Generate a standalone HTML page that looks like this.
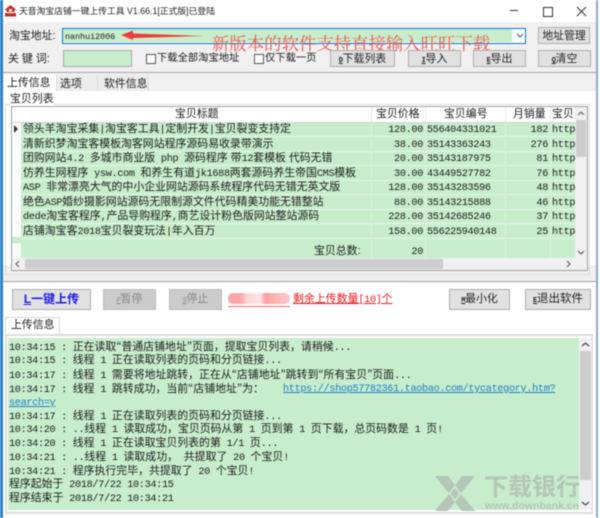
<!DOCTYPE html>
<html><head><meta charset="utf-8"><style>
html,body{margin:0;padding:0;background:#fff}
#p{position:relative;width:600px;height:518px;overflow:hidden;background:#fff;font:10.9px "Liberation Sans","Noto Sans CJK SC",sans-serif;color:#1c1c1c;filter:blur(.4px)}
#p div,#p svg{position:absolute}
.t{white-space:pre;line-height:14px}
i{font:normal 10.2px/14px "Liberation Mono",monospace;letter-spacing:-.32px}
s{text-decoration:none;font-family:"Noto Sans CJK JP",sans-serif}
b.k{font:bold 7px/14px "Liberation Mono",monospace;text-decoration:underline;letter-spacing:-.3px}
.b{background:#e1e1e1;border:1px solid #adadad;box-sizing:border-box;text-align:center;line-height:16px;white-space:pre;color:#222}
.d{background:#cbcbcb;border:1px solid #bdbdbd;box-sizing:border-box;text-align:center;line-height:17px;color:#8a8a8a}
.g{background:#c7edcc}
.r{text-align:right}
.c{width:10px;height:10px;border:1px solid #555;background:#fff;box-sizing:border-box}
</style></head><body><div id="p">
<div style="left:0;top:0;width:3px;height:518px;background:#2a7fc9"></div>
<div style="left:596px;top:0;width:2px;height:518px;background:#8fa9c4"></div>
<div style="left:3px;top:22px;width:593px;height:50px;background:#f0f0f0"></div>
<div style="left:3px;top:72px;width:593px;height:1px;background:#a8a8a8"></div>
<div style="left:3px;top:73px;width:593px;height:18px;background:#f0f0f0"></div>
<div style="left:3px;top:265px;width:593px;height:16px;background:#f0f0f0"></div>
<div style="left:3px;top:281px;width:593px;height:1px;background:#a0a0a0"></div>

<!-- title -->
<svg style="left:4px;top:5px" width="13" height="12" viewBox="0 0 13 12"><path d="M6.5 0L12.5 5H10.5V7H2.500V5H.5Z" fill="#c8281e"/><rect x="1" y="8" width="11" height="3.5" fill="#c8281e"/><rect x="5" y="4" width="3" height="2.5" fill="#fff"/><rect x="3" y="7.2" width="7" height="1" fill="#fff"/></svg>
<div class="t" style="left:19px;top:4px;font-size:8.8px;color:#222">天音淘宝店铺一键上传工具 V1.66.1[正式版]已登陆</div>
<div style="left:510px;top:10px;width:8px;height:1px;background:#333"></div>
<div style="left:543px;top:7px;width:8px;height:8px;border:1px solid #333"></div>
<svg style="left:576px;top:6px" width="11" height="11"><path d="M1 1L10 10M10 1L1 10" stroke="#333" fill="none"/></svg>

<!-- row 1 -->
<div class="t" style="left:9px;top:29px">淘宝地址:</div>
<div style="left:62px;top:28px;width:464px;height:16px;background:#fff;border:1px solid #0078d7;box-sizing:border-box"></div>
<div class="g" style="left:63px;top:29px;width:449px;height:13px"></div>
<div class="t" style="left:65px;top:29px"><i style="font-size:8.4px;letter-spacing:0">nanhui2006</i></div>
<svg style="left:516px;top:33px" width="8" height="6"><path d="M1 1L4 4L7 1" stroke="#555" fill="none"/></svg>
<div class="b" style="left:538px;top:27px;width:52px;height:17px">地址管理</div>

<!-- arrow and overlay text -->
<svg style="left:118px;top:28px" width="90" height="14"><path d="M3 7L15 2.500L15 5.500L86 8L15 10L15 12Z" fill="#ee3b3b"/></svg>
<div class="t" style="left:212px;top:33px;font:17.4px/20px 'Noto Serif CJK SC',serif;color:#f0584e">新版本的软件支持直接输入旺旺下载</div>

<!-- row 2 -->
<div class="t" style="left:8px;top:52px">关 键 词:</div>
<div class="g" style="left:63px;top:50px;width:69px;height:17px;border:1px solid #a9a9a9;box-sizing:border-box"></div>
<div class="c" style="left:146px;top:54px"></div>
<div class="t" style="left:157px;top:52px;font-size:10.3px">下载全部淘宝地址</div>
<div class="c" style="left:254px;top:54px"></div>
<div class="t" style="left:265px;top:52px;font-size:10.3px">仅下载一页</div>
<div class="b" style="left:330px;top:50px;width:65px;height:17px"><b class="k">D</b>下载列表</div>
<div class="b" style="left:408px;top:50px;width:53px;height:17px"><b class="k">I</b>导入</div>
<div class="b" style="left:473px;top:50px;width:53px;height:17px"><b class="k">E</b>导出</div>
<div class="b" style="left:538px;top:50px;width:53px;height:17px"><b class="k">Q</b>清空</div>

<!-- tabs -->
<div style="left:4px;top:74px;width:52px;height:18px;background:#fff"></div>
<div class="t" style="left:7px;top:76px">上传信息</div>
<div style="left:56px;top:75px;width:42px;height:16px;background:#ececec;border-left:1px solid #ddd;border-right:1px solid #ddd;box-sizing:border-box"></div>
<div style="left:98px;top:75px;width:51px;height:16px;background:#ececec;border-right:1px solid #ddd;box-sizing:border-box"></div>
<div class="t" style="left:60px;top:77px">选项</div>
<div class="t" style="left:104px;top:77px">软件信息</div>

<!-- group -->
<div style="left:5px;top:104px;width:585px;height:171px;border:1px solid #dcdcdc;box-sizing:border-box"></div>
<div class="t" style="left:10px;top:92px;background:#fff">宝贝列表</div>
<div style="left:11px;top:106px;width:577px;height:165px;background:#f0f0f0;border:1px solid #a0a0a0;box-sizing:border-box"></div>
<div style="left:12px;top:107px;width:563px;height:15px;background:#fff"></div>
<div class="g" style="left:21px;top:122px;width:554px;height:136px"></div>
<div style="left:12px;top:122px;width:9px;height:115px;background:#fff"></div>
<div class="g" style="left:12px;top:237px;width:9px;height:6px"></div>
<div style="left:12px;top:243px;width:9px;height:15px;background:#fff;opacity:.6"></div>
<div style="left:21px;top:136px;width:554px;height:1px;background:#e4f5e7"></div>
<div style="left:21px;top:150.5px;width:554px;height:1px;background:#e4f5e7"></div>
<div style="left:21px;top:165px;width:554px;height:1px;background:#e4f5e7"></div>
<div style="left:21px;top:179.5px;width:554px;height:1px;background:#e4f5e7"></div>
<div style="left:21px;top:194px;width:554px;height:1px;background:#e4f5e7"></div>
<div style="left:21px;top:208.5px;width:554px;height:1px;background:#e4f5e7"></div>
<div style="left:21px;top:223px;width:554px;height:1px;background:#e4f5e7"></div>
<div style="left:21px;top:237.5px;width:554px;height:1px;background:#e4f5e7"></div>
<div style="left:371px;top:107px;width:1px;height:151px;background:#dfeee2"></div>
<div style="left:425px;top:107px;width:1px;height:151px;background:#dfeee2"></div>
<div style="left:505px;top:107px;width:1px;height:151px;background:#dfeee2"></div>
<div style="left:550px;top:107px;width:1px;height:151px;background:#dfeee2"></div>
<div style="left:12px;top:122px;width:563px;height:1px;background:#d5d5d5"></div>
<svg style="left:14px;top:125px" width="5" height="8"><path d="M0 0L4 4L0 8Z" fill="#333"/></svg>

<div class="t" style="left:175px;top:107px">宝贝标题</div>
<div class="t" style="left:376px;top:107px">宝贝价格</div>
<div class="t" style="left:444px;top:107px">宝贝编号</div>
<div class="t" style="left:513px;top:107px">月销量</div>
<div class="t" style="left:552px;top:107px">宝贝</div>

<div class="t" style="left:23px;top:122px">领头羊淘宝采集<i>|</i>淘宝客工具<i>|</i>定制开发<i>|</i>宝贝裂变支持定</div>
<div class="t" style="left:23px;top:136.5px">清新织梦淘宝客模板淘客网站程序源码易收录带演示</div>
<div class="t" style="left:23px;top:151px">团购网站<i>4.2 </i>多城市商业版<i> php </i>源码程序 带<i>12</i>套模板 代码无错</div>
<div class="t" style="left:23px;top:165.5px">仿养生网程序<i> ysw.com </i>和养生有道<i>jk1688</i>两套源码养生帝国<i>CMS</i>模板</div>
<div class="t" style="left:23px;top:180px"><i>ASP </i>非常漂亮大气的中小企业网站源码系统程序代码无错无英文版</div>
<div class="t" style="left:23px;top:194.5px">绝色<i>ASP</i>婚纱摄影网站源码无限制源文件代码精美功能无错整站</div>
<div class="t" style="left:23px;top:209px"><i>dede</i>淘宝客程序<i>&#44;</i>产品导购程序<i>&#44;</i>商艺设计粉色版网站整站源码</div>
<div class="t" style="left:23px;top:223.5px">店铺淘宝客<i>2018</i>宝贝裂变玩法<i>|</i>年入百万</div>

<div class="t r" style="left:372px;top:122px;width:51px"><i>128.00</i></div>
<div class="t r" style="left:372px;top:136.5px;width:51px"><i>38.00</i></div>
<div class="t r" style="left:372px;top:151px;width:51px"><i>20.00</i></div>
<div class="t r" style="left:372px;top:165.5px;width:51px"><i>30.00</i></div>
<div class="t r" style="left:372px;top:180px;width:51px"><i>128.00</i></div>
<div class="t r" style="left:372px;top:194.5px;width:51px"><i>88.00</i></div>
<div class="t r" style="left:372px;top:209px;width:51px"><i>228.00</i></div>
<div class="t r" style="left:372px;top:223.5px;width:51px"><i>158.00</i></div>

<div class="t" style="left:427px;top:122px"><i>556404331021</i></div>
<div class="t" style="left:427px;top:136.5px"><i>35143363243</i></div>
<div class="t" style="left:427px;top:151px"><i>35143187975</i></div>
<div class="t" style="left:427px;top:165.5px"><i>43449527782</i></div>
<div class="t" style="left:427px;top:180px"><i>35143283596</i></div>
<div class="t" style="left:427px;top:194.5px"><i>35143215888</i></div>
<div class="t" style="left:427px;top:209px"><i>35142685246</i></div>
<div class="t" style="left:427px;top:223.5px"><i>556225940148</i></div>

<div class="t r" style="left:506px;top:122px;width:42px"><i>182</i></div>
<div class="t r" style="left:506px;top:136.5px;width:42px"><i>276</i></div>
<div class="t r" style="left:506px;top:151px;width:42px"><i>81</i></div>
<div class="t r" style="left:506px;top:165.5px;width:42px"><i>76</i></div>
<div class="t r" style="left:506px;top:180px;width:42px"><i>48</i></div>
<div class="t r" style="left:506px;top:194.5px;width:42px"><i>46</i></div>
<div class="t r" style="left:506px;top:209px;width:42px"><i>37</i></div>
<div class="t r" style="left:506px;top:223.5px;width:42px"><i>25</i></div>

<div class="t" style="left:552px;top:122px"><i>http</i></div>
<div class="t" style="left:552px;top:136.5px"><i>http</i></div>
<div class="t" style="left:552px;top:151px"><i>http</i></div>
<div class="t" style="left:552px;top:165.5px"><i>http</i></div>
<div class="t" style="left:552px;top:180px"><i>http</i></div>
<div class="t" style="left:552px;top:194.5px"><i>http</i></div>
<div class="t" style="left:552px;top:209px"><i>http</i></div>
<div class="t" style="left:552px;top:223.5px"><i>http</i></div>

<div class="t" style="left:314px;top:244px">宝贝总数:</div>
<div class="t r" style="left:372px;top:244px;width:51px"><i>20</i></div>

<!-- list scrollbars -->
<div style="left:575px;top:107px;width:12px;height:151px;background:#f0f0f0"></div>
<div style="left:576px;top:120px;width:10px;height:37px;background:#cdcdcd"></div>
<svg style="left:577px;top:111px" width="8" height="6"><path d="M1 4L4 1L7 4" stroke="#555" fill="none"/></svg>
<svg style="left:577px;top:250px" width="8" height="6"><path d="M1 1L4 4L7 1" stroke="#555" fill="none"/></svg>
<div style="left:12px;top:258px;width:575px;height:12px;background:#f0f0f0"></div>
<div style="left:25px;top:259px;width:418px;height:10px;background:#cdcdcd"></div>
<svg style="left:15px;top:260px" width="6" height="8"><path d="M4 1L1 4L4 7" stroke="#555" fill="none"/></svg>
<svg style="left:566px;top:260px" width="6" height="8"><path d="M1 1L4 4L1 7" stroke="#555" fill="none"/></svg>

<!-- action row -->
<div class="b" style="left:12px;top:289px;width:79px;height:21px;line-height:19px;color:#1c1ce8;font-weight:bold;font-size:12px"><u>L</u>一键上传</div>
<div class="d" style="left:103px;top:289px;width:53px;height:21px;line-height:19px"><b class="k" style="font-weight:normal">P</b>暂停</div>
<div class="d" style="left:169px;top:289px;width:53px;height:21px;line-height:19px"><b class="k" style="font-weight:normal">S</b>停止</div>
<div style="left:228px;top:293px;width:62px;height:11px;border-radius:5px;background:linear-gradient(90deg,#ffa8ac 0,#ffa8ac 22%,#ffd4d6 30%,#ffe6e7 52%,#ff9ea2 60%,#ffb6b9 78%,#ffc9cb 100%)"></div>
<div style="left:228px;top:306px;width:62px;height:1px;background:#f66"></div>
<div class="t" style="left:293px;top:292px;color:#f01818;text-decoration:underline">剩余上传数量<i>[10]</i>个</div>
<div class="b" style="left:449px;top:289px;width:61px;height:21px;line-height:19px"><b class="k">M</b>最小化</div>
<div class="b" style="left:525px;top:289px;width:66px;height:21px;line-height:19px;font-size:11.500px"><b class="k">E</b>退出软件</div>

<!-- lower tab -->
<div style="left:5px;top:317px;width:55px;height:18px;background:#fff;border:1px solid #d9d9d9;border-bottom:0;box-sizing:border-box"></div>
<div class="t" style="left:11px;top:318px">上传信息</div>

<!-- log -->
<div style="left:5px;top:334px;width:588px;height:180px;background:#fff;border:2px solid #dcdcdc;box-sizing:border-box"></div>
<div class="g" style="left:8px;top:338px;width:571px;height:172px"></div>
<div style="left:579px;top:338px;width:13px;height:172px;background:#f0f0f0"></div>
<div style="left:580px;top:351px;width:11px;height:129px;background:#cdcdcd"></div>
<svg style="left:581px;top:342px" width="9" height="6"><path d="M1 4L4.5 1L8 4" stroke="#444" stroke-width="1.2" fill="none"/></svg>
<svg style="left:581px;top:501px" width="9" height="6"><path d="M1 1L4.5 4L8 1" stroke="#444" stroke-width="1.2" fill="none"/></svg>

<div class="t" style="left:9px;top:339px"><i>10:34:15 : </i>正在读取<s>“</s>普通店铺地址<s>”</s>页面&#65292;提取宝贝列表&#65292;请稍候<i>...</i></div>
<div class="t" style="left:9px;top:353px"><i>10:34:15 : </i>线程<i> 1 </i>正在读取列表的页码和分页链接<i>...</i></div>
<div class="t" style="left:9px;top:367px"><i>10:34:17 : </i>线程<i> 1 </i>需要将地址跳转&#65292;正在从<s>“</s>店铺地址<s>”</s>跳转到<s>“</s>所有宝贝<s>”</s>页面<i>...</i></div>
<div class="t" style="left:9px;top:381px"><i>10:34:17 : </i>线程<i> 1 </i>跳转成功&#65292;当前<s>“</s>店铺地址<s>”</s>为&#65306;</div>
<div class="t" style="left:283px;top:381px;color:#1c7fc8;text-decoration:underline"><i>https://shop57782361.taobao.com/tycategory.htm?</i></div>
<div class="t" style="left:9px;top:395px;color:#1c7fc8;text-decoration:underline"><i>search=y</i></div>
<div class="t" style="left:9px;top:408.5px"><i>10:34:17 : </i>线程<i> 1 </i>正在读取列表的页码和分页链接<i>...</i></div>
<div class="t" style="left:9px;top:422px"><i>10:34:20 : ..</i>线程<i> 1 </i>读取成功&#65292;宝贝页码从第<i> 1 </i>页到第<i> 1 </i>页下载&#65292;总页码数是<i> 1 </i>页<i>!</i></div>
<div class="t" style="left:9px;top:436px"><i>10:34:20 : </i>线程<i> 1 </i>正在读取宝贝列表的第<i> 1/1 </i>页<i>...</i></div>
<div class="t" style="left:9px;top:449.5px"><i>10:34:21 : ..</i>线程<i> 1 </i>读取成功&#65292;<i> </i>共提取了<i> 20 </i>个宝贝<i>!</i></div>
<div class="t" style="left:9px;top:463.5px"><i>10:34:21 : </i>程序执行完毕&#65292;共提取了<i> 20 </i>个宝贝<i>!</i></div>
<div class="t" style="left:9px;top:477px">程序起始于<i> 2018/7/22 10:34:15</i></div>
<div class="t" style="left:9px;top:491px">程序结束于<i> 2018/7/22 10:34:21</i></div>

<!-- watermark -->
<svg style="left:434px;top:476px" width="42" height="35" viewBox="0 0 42 35"><g fill="#b4c6b7"><path d="M1 0H14L21 9L28 0H41L27 17L21 9L15 17Z"/><path d="M1 35H14L21 26L28 35H41L27 18L21 26L15 18Z"/><path d="M21 12L25.500 17.500L21 23L16.500 17.500Z"/></g></svg>
<div class="t" style="left:484px;top:475px;font-size:24px;line-height:26px;font-weight:bold;color:#b4c6b7">下载银行</div>
<div class="t" style="left:485px;top:500px;font-size:10.500px;line-height:12px;font-weight:bold;color:#b4c6b7">www.downbank.cn</div>
</div></body></html>
